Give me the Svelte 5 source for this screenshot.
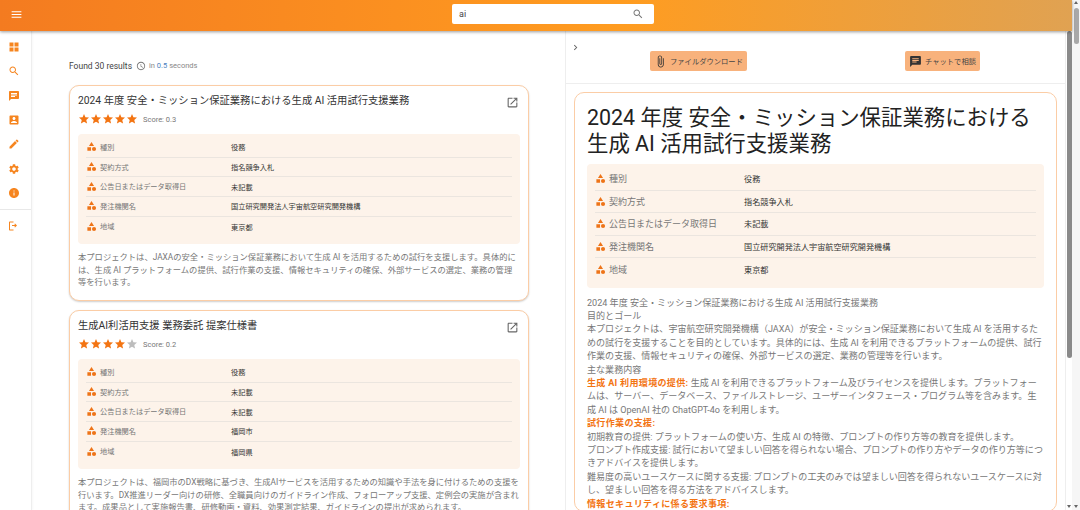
<script>
	const navIcons = [
		'M3 3h8v8H3zM13 3h8v8h-8zM3 13h8v8H3zM13 13h8v8h-8z',
		'M15.5 14h-.79l-.28-.27C15.41 12.59 16 11.11 16 9.5 16 5.91 13.09 3 9.5 3S3 5.91 3 9.5 5.91 16 9.5 16c1.61 0 3.09-.59 4.23-1.57l.27.28v.79l5 4.99L20.49 19l-4.99-5zm-6 0C7.01 14 5 11.99 5 9.5S7.01 5 9.5 5 14 7.01 14 9.5 11.99 14 9.5 14z',
		'M20 2H4c-1.1 0-1.99.9-1.99 2L2 22l4-4h14c1.1 0 2-.9 2-2V4c0-1.1-.9-2-2-2zM6 9h12v2H6V9zm8 5H6v-2h8v2zm4-6H6V6h12v2z',
		'M3 5v14c0 1.1.89 2 2 2h14c1.1 0 2-.9 2-2V5c0-1.1-.9-2-2-2H5c-1.11 0-2 .9-2 2zm12 4c0 1.66-1.34 3-3 3s-3-1.34-3-3 1.34-3 3-3 3 1.34 3 3zm-9 8c0-2 4-3.1 6-3.1s6 1.1 6 3.1v1H6v-1z',
		'M3 17.25V21h3.75L17.81 9.94l-3.75-3.75L3 17.25zM20.71 7.04c.39-.39.39-1.02 0-1.41l-2.34-2.34c-.39-.39-1.02-.39-1.41 0l-1.83 1.83 3.75 3.75 1.83-1.83z',
		'M19.14 12.94c.04-.3.06-.61.06-.94 0-.32-.02-.64-.07-.94l2.03-1.58c.18-.14.23-.41.12-.61l-1.92-3.32c-.12-.22-.37-.29-.59-.22l-2.39.96c-.5-.38-1.03-.7-1.62-.94l-.36-2.54c-.04-.24-.24-.41-.48-.41h-3.84c-.24 0-.43.17-.47.41l-.36 2.54c-.59.24-1.13.57-1.62.94l-2.39-.96c-.22-.08-.47 0-.59.22L2.74 8.87c-.12.21-.08.47.12.61l2.03 1.58c-.05.3-.09.63-.09.94s.02.64.07.94l-2.03 1.58c-.18.14-.23.41-.12.61l1.92 3.32c.12.22.37.29.59.22l2.39-.96c.5.38 1.03.7 1.62.94l.36 2.54c.05.24.24.41.48.41h3.84c.24 0 .44-.17.47-.41l.36-2.54c.59-.24 1.13-.56 1.62-.94l2.39.96c.22.08.47 0 .59-.22l1.92-3.32c.12-.22.07-.47-.12-.61l-2.01-1.58zM12 15.6c-1.98 0-3.6-1.62-3.6-3.6s1.62-3.6 3.6-3.6 3.6 1.62 3.6 3.6-1.62 3.6-3.6 3.6z',
		'M12 2C6.48 2 2 6.48 2 12s4.48 10 10 10 10-4.48 10-10S17.52 2 12 2zm1 15h-2v-6h2v6zm0-8h-2V7h2v2z'
	];
	const logoutIcon = 'M14 7l-1.4 1.4 1.6 1.6H8v2h6.2l-1.6 1.6L14 15l4-4-4-4zM4 5h7V3H4c-1.1 0-2 .9-2 2v14c0 1.1.9 2 2 2h7v-2H4V5z';
	const categoryIcon = 'M12 2l-5.5 9h11L12 2zM17.5 13a4.5 4.5 0 1 0 0 9 4.5 4.5 0 0 0 0-9zM3 13.5h8v8H3z';
	const starIcon = 'M12 17.27L18.18 21l-1.64-7.03L22 9.24l-7.19-.61L12 2 9.19 8.63 2 9.24l5.46 4.73L5.82 21z';

	const results = [
		{
			title: '2024 年度 安全・ミッション保証業務における生成 AI 活用試行支援業務',
			stars: 5,
			score: '0.3',
			rows: [
				['種別', '役務'],
				['契約方式', '指名競争入札'],
				['公告日またはデータ取得日', '未記載'],
				['発注機関名', '国立研究開発法人宇宙航空研究開発機構'],
				['地域', '東京都']
			],
			text: '本プロジェクトは、JAXAの安全・ミッション保証業務において生成 AI を活用するための試行を支援します。具体的には、生成 AI プラットフォームの提供、試行作業の支援、情報セキュリティの確保、外部サービスの選定、業務の管理等を行います。'
		},
		{
			title: '生成AI利活用支援 業務委託 提案仕様書',
			stars: 4,
			score: '0.2',
			rows: [
				['種別', '役務'],
				['契約方式', '未記載'],
				['公告日またはデータ取得日', '未記載'],
				['発注機関名', '福岡市'],
				['地域', '福岡県']
			],
			text: '本プロジェクトは、福岡市のDX戦略に基づき、生成AIサービスを活用するための知識や手法を身に付けるための支援を行います。DX推進リーダー向けの研修、全職員向けのガイドライン作成、フォローアップ支援、定例会の実施が含まれます。成果品として実施報告書、研修動画・資料、効果測定結果、ガイドラインの提出が求められます。'
		}
	];
</script>

<div class="page">
	<div class="main">
		<header class="topbar">
			<svg class="menu" viewBox="0 0 24 24"><path d="M3 18h18v-2H3v2zm0-5h18v-2H3v2zm0-7v2h18V6H3z" /></svg>
			<div class="search">
				<span>ai</span>
				<svg viewBox="0 0 24 24"><path d={navIcons[1]} /></svg>
			</div>
		</header>

		<div class="body">
			<nav class="sidebar">
				{#each navIcons as d}
					<svg viewBox="0 0 24 24"><path {d} /></svg>
				{/each}
				<hr />
				<svg viewBox="0 0 24 24"><path d={logoutIcon} /></svg>
			</nav>

			<section class="results">
				<div class="found">
					<span>Found 30 results</span>
					<svg viewBox="0 0 24 24"><path d="M11.99 2C6.47 2 2 6.48 2 12s4.47 10 9.99 10C17.52 22 22 17.52 22 12S17.52 2 11.99 2zM12 20c-4.42 0-8-3.58-8-8s3.58-8 8-8 8 3.58 8 8-3.58 8-8 8zm.5-13H11v6l5.25 3.15.75-1.23-4.5-2.67z" /></svg>
					<small>in <b>0.5</b> seconds</small>
				</div>

				{#each results as item}
					<article class="card">
						<div class="card-head">
							<h2>{item.title}</h2>
							<svg viewBox="0 0 24 24"><path d="M19 19H5V5h7V3H5c-1.11 0-2 .9-2 2v14c0 1.1.89 2 2 2h14c1.1 0 2-.9 2-2v-7h-2v7zM14 3v2h3.59l-9.83 9.83 1.41 1.41L19 6.41V10h2V3h-7z" /></svg>
						</div>
						<div class="rating">
							{#each [1, 2, 3, 4, 5] as n}
								<svg class:off={n > item.stars} viewBox="0 0 24 24"><path d={starIcon} /></svg>
							{/each}
							<span>Score: {item.score}</span>
						</div>
						<div class="meta">
							{#each item.rows as [label, value]}
								<div class="row">
									<span class="label"><svg viewBox="0 0 24 24"><path d={categoryIcon} /></svg>{label}</span>
									<span class="value">{value}</span>
								</div>
							{/each}
						</div>
						<p>{item.text}</p>
					</article>
				{/each}
			</section>

			<section class="detail">
				<div class="toolbar">
					<svg class="chevron" viewBox="0 0 24 24"><path d="M10 6L8.59 7.41 13.17 12l-4.58 4.59L10 18l6-6z" /></svg>
					<div class="actions">
						<button>
							<svg viewBox="0 0 24 24"><path d="M16.5 6v11.5c0 2.21-1.79 4-4 4s-4-1.79-4-4V5a2.5 2.5 0 0 1 5 0v10.5c0 .55-.45 1-1 1s-1-.45-1-1V6H10v9.5a2.5 2.5 0 0 0 5 0V5c0-2.21-1.79-4-4-4S7 2.79 7 5v12.5c0 3.04 2.46 5.5 5.5 5.5s5.5-2.46 5.5-5.5V6h-1.5z" /></svg>
							ファイルダウンロード
						</button>
						<button>
							<svg viewBox="0 0 24 24"><path d={navIcons[2]} /></svg>
							チャットで相談
						</button>
					</div>
				</div>

				<article class="doc">
					<h1>2024 年度 安全・ミッション保証業務における生成 AI 活用試行支援業務</h1>
					<div class="meta">
						{#each results[0].rows as [label, value]}
							<div class="row">
								<span class="label"><svg viewBox="0 0 24 24"><path d={categoryIcon} /></svg>{label}</span>
								<span class="value">{value}</span>
							</div>
						{/each}
					</div>
					<div class="doc-text">
						<p>2024 年度 安全・ミッション保証業務における生成 AI 活用試行支援業務</p>
						<p>目的とゴール</p>
						<p>本プロジェクトは、宇宙航空研究開発機構（JAXA）が安全・ミッション保証業務において生成 AI を活用するための試行を支援することを目的としています。具体的には、生成 AI を利用できるプラットフォームの提供、試行作業の支援、情報セキュリティの確保、外部サービスの選定、業務の管理等を行います。</p>
						<p>主な業務内容</p>
						<p><strong>生成 AI 利用環境の提供:</strong> 生成 AI を利用できるプラットフォーム及びライセンスを提供します。プラットフォームは、サーバー、データベース、ファイルストレージ、ユーザーインタフェース・プログラム等を含みます。生成 AI は OpenAI 社の ChatGPT-4o を利用します。</p>
						<p><strong>試行作業の支援:</strong></p>
						<p>初期教育の提供: プラットフォームの使い方、生成 AI の特徴、プロンプトの作り方等の教育を提供します。</p>
						<p>プロンプト作成支援: 試行において望ましい回答を得られない場合、プロンプトの作り方やデータの作り方等につきアドバイスを提供します。</p>
						<p>難易度の高いユースケースに関する支援: プロンプトの工夫のみでは望ましい回答を得られないユースケースに対し、望ましい回答を得る方法をアドバイスします。</p>
						<p><strong>情報セキュリティに係る要求事項:</strong></p>
					</div>
				</article>
			</section>

			<div class="inner-scroll"><i></i></div>
		</div>
	</div>

	<div class="page-scroll"><i></i></div>
</div>

<style>
	:global(body) {
		margin: 0;
		background: #fff;
		font-family: Roboto, 'Noto Sans CJK JP', sans-serif;
		color: #333;
	}

	.page {
		display: flex;
		height: 510px;
		overflow: hidden;
	}

	.main {
		flex: 1;
		min-width: 0;
		display: flex;
		flex-direction: column;
	}

	.topbar {
		flex: none;
		position: relative;
		z-index: 1;
		height: 31px;
		box-sizing: border-box;
		display: flex;
		align-items: center;
		padding: 0 0 3px 10px;
		background: linear-gradient(90deg, #f47b20, #ff9c20 58%, #e0a252);
		box-shadow: 0 1px 3px rgba(0, 0, 0, 0.4);
	}

	.menu {
		width: 13px;
		height: 13px;
		fill: #fff;
	}

	.search {
		margin-left: 429px;
		width: 202px;
		height: 20px;
		box-sizing: border-box;
		padding: 0 10px 0 7px;
		display: flex;
		align-items: center;
		justify-content: space-between;
		background: #fff;
		border-radius: 2px;
		font-size: 9px;
		color: #444;
	}

	.search svg {
		width: 12px;
		height: 12px;
		fill: #777;
	}

	.body {
		flex: 1;
		min-height: 0;
		display: flex;
	}

	.sidebar {
		flex: none;
		width: 32px;
		box-sizing: border-box;
		padding-top: 10px;
		border-right: 1px solid #eee;
		display: flex;
		flex-direction: column;
		box-shadow: 1px 0 2px rgba(0, 0, 0, 0.03);
	}

	.sidebar svg {
		flex: none;
		width: 12px;
		height: 12px;
		margin: 0 0 12.33px 8px;
		fill: #f6851f;
	}

	.sidebar hr {
		width: 100%;
		margin: -2px 0 10px;
		border: 0;
		border-top: 1px solid #e8e8e8;
	}

	.results {
		flex: none;
		width: 534px;
		box-sizing: border-box;
		padding: 28px 36px 0 37px;
		border-right: 1px solid #eee;
		overflow: hidden;
	}

	.found {
		height: 13px;
		display: flex;
		align-items: center;
		margin-bottom: 13px;
		font-size: 8.5px;
		color: #444;
	}

	.found svg {
		width: 10px;
		height: 10px;
		margin: 0 3px 0 4px;
		fill: #777;
	}

	.found small {
		font-size: 7.5px;
		color: #888;
	}

	.found b {
		font-weight: 400;
		color: #4a7fc0;
	}

	.card {
		box-sizing: border-box;
		height: 216px;
		margin-bottom: 9px;
		padding: 6px 8px 0;
		border: 1px solid #fbcda6;
		border-radius: 10px;
		box-shadow: 0 1px 2px rgba(0, 0, 0, 0.2);
		background: #fff;
	}

	.card:last-child {
		height: 260px;
	}

	.card-head {
		display: flex;
		justify-content: space-between;
		align-items: center;
		height: 15px;
	}

	.card-head h2 {
		margin: 0;
		font-size: 10.3px;
		font-weight: 400;
		color: #333;
		white-space: nowrap;
	}

	.card-head svg {
		width: 13px;
		height: 13px;
		margin: 6px 1px 0 0;
		fill: #666;
	}

	.rating {
		display: flex;
		align-items: center;
		height: 14px;
		margin: 5px 0 8px;
	}

	.rating svg {
		width: 12px;
		height: 12px;
		fill: #f37412;
	}

	.rating svg.off {
		fill: #bdbdbd;
	}

	.rating span {
		margin-left: 5px;
		font-size: 7.5px;
		color: #777;
	}

	.meta {
		padding: 4px 8px 8px;
		background: #fdf3ea;
		border-radius: 4px;
	}

	.row {
		display: grid;
		grid-template-columns: 145px 1fr;
		align-items: center;
		box-sizing: border-box;
		height: 19.7px;
		border-bottom: 1px solid #ebe5df;
		font-size: 7.2px;
	}

	.row:last-child {
		border-bottom: 0;
	}

	.label {
		display: flex;
		align-items: center;
		gap: 3px;
		padding-bottom: 1px;
		color: #777;
	}

	.label svg {
		width: 11px;
		height: 11px;
		fill: #ee7418;
	}

	.value {
		color: #333;
	}

	.card p {
		margin: 7px 0 0;
		font-size: 8.3px;
		line-height: 12.3px;
		color: #777;
	}

	.detail {
		flex: 1;
		min-width: 0;
		overflow: hidden;
	}

	.toolbar {
		position: relative;
		height: 53px;
		box-sizing: border-box;
		border-bottom: 1px solid #eee;
	}

	.chevron {
		position: absolute;
		left: 4px;
		top: 11px;
		width: 11px;
		height: 11px;
		fill: #666;
	}

	.actions {
		display: flex;
		gap: 158px;
		padding: 20px 0 0 84px;
	}

	.actions button {
		height: 20px;
		padding: 0 4px;
		display: flex;
		align-items: center;
		gap: 3px;
		background: #f8b27c;
		border: 0;
		border-radius: 2px;
		font: 7.3px Roboto, 'Noto Sans CJK JP', sans-serif;
		color: #444;
	}

	.actions svg {
		width: 13px;
		height: 13px;
		fill: #333;
	}

	.doc {
		margin: 8px 8px 0;
		padding: 12px 12px 0;
		border: 1px solid #fbcda6;
		border-radius: 10px;
	}

	.doc h1 {
		margin: 0 0 7px;
		font-size: 21.4px;
		line-height: 26px;
		font-weight: 400;
		color: #222;
	}

	.doc .meta {
		padding-bottom: 7px;
	}

	.doc .row {
		height: 22.5px;
		grid-template-columns: 149px 1fr;
		font-size: 8.15px;
	}

	.doc .label {
		padding-bottom: 0;
		font-size: 9px;
	}

	.doc-text {
		margin-top: 9px;
		font-size: 9.05px;
		line-height: 13.4px;
		color: #777;
	}

	.doc-text p {
		margin: 0;
	}

	.doc-text strong {
		color: #f37412;
		font-weight: 700;
		letter-spacing: 0.3px;
	}

	.inner-scroll {
		flex: none;
		width: 7px;
		box-sizing: border-box;
		border-left: 1px solid #eee;
		display: flex;
		flex-direction: column;
		justify-content: space-between;
	}

	.inner-scroll i {
		display: block;
		width: 5px;
		height: 327px;
		margin-left: 1px;
		background: #8a8a8a;
		border-radius: 3px;
	}

	.inner-scroll::after,
	.page-scroll::after {
		content: '';
		width: 0;
		margin: 0 0 2px 1px;
		border: 2.5px solid transparent;
		border-top: 3px solid #666;
		border-bottom: 0;
	}

	.page-scroll {
		flex: none;
		width: 8px;
		background: #f6f6f6;
		display: flex;
		flex-direction: column;
		align-items: flex-start;
		padding-top: 8px;
		box-sizing: border-box;
		justify-content: space-between;
		position: relative;
	}

	.page-scroll::before {
		content: '';
		position: absolute;
		top: 1px;
		left: 1.5px;
		width: 0;
		border: 2.5px solid transparent;
		border-bottom: 3px solid #666;
		border-top: 0;
	}

	.page-scroll i {
		display: block;
		width: 5px;
		height: 36px;
		margin-left: 1.5px;
		background: #a8a8a8;
		border-radius: 3px;
	}

	.page-scroll::after {
		margin-left: 1.5px;
	}
</style>
